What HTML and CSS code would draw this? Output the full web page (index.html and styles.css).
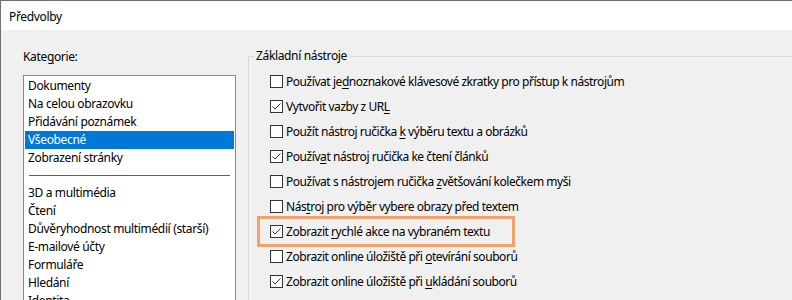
FILE: index.html
```html
<!DOCTYPE html>
<html lang="cs">
<head>
<meta charset="utf-8">
<title>Předvolby</title>
<link rel="stylesheet" href="styles.css">
</head>
<body>
<div class="window">
  <div class="titlebar">Předvolby</div>
  <div class="main">
    <div class="left">
      <div class="cat-label">Kate<u>g</u>orie:</div>
      <div class="listbox">
        <div class="item">Dokumenty</div>
        <div class="item">Na celou obrazovku</div>
        <div class="item">Přidávání poznámek</div>
        <div class="item selected">Všeobecné</div>
        <div class="item">Zobrazení stránky</div>
        <div class="sep"></div>
        <div class="item">3D a multimédia</div>
        <div class="item">Čtení</div>
        <div class="item">Důvěryhodnost multimédií (starší)</div>
        <div class="item">E-mailové účty</div>
        <div class="item">Formuláře</div>
        <div class="item">Hledání</div>
        <div class="item">Identita</div>
      </div>
    </div>
    <fieldset class="group">
      <legend>Základní nástroje</legend>
      <div class="rows">
        <label class="row"><span class="cb"></span><span>Používat je<u>d</u>noznakové klávesové zkratky pro přístup k nástrojům</span></label>
        <label class="row"><span class="cb checked"><svg viewBox="0 0 11 11" width="11" height="11"><polyline points="1.5,5.5 4,8 9.5,2.5" /></svg></span><span>Vytvořit vazby z UR<u>L</u></span></label>
        <label class="row"><span class="cb"></span><span>Použít nástroj ručička <u>k</u> výběru textu a obrázků</span></label>
        <label class="row"><span class="cb checked"><svg viewBox="0 0 11 11" width="11" height="11"><polyline points="1.5,5.5 4,8 9.5,2.5" /></svg></span><span>Použív<u>a</u>t nástroj ručička ke čtení článků</span></label>
        <label class="row"><span class="cb"></span><span>Používat s nástrojem ručička <u>z</u>většování kolečkem myši</span></label>
        <label class="row"><span class="cb"></span><span>Nás<u>t</u>roj pro výběr vybere obrazy před textem</span></label>
        <label class="row highlight"><span class="cb checked"><svg viewBox="0 0 11 11" width="11" height="11"><polyline points="1.5,5.5 4,8 9.5,2.5" /></svg></span><span>Zobrazit <u>r</u>ychlé akce na vybraném textu</span></label>
        <label class="row"><span class="cb"></span><span>Zobrazit online úložiště při <u>o</u>tevírání souborů</span></label>
        <label class="row"><span class="cb checked"><svg viewBox="0 0 11 11" width="11" height="11"><polyline points="1.5,5.5 4,8 9.5,2.5" /></svg></span><span>Zobrazit online úložiště při <u>u</u>kládání souborů</span></label>
      </div>
    </fieldset>
  </div>
</div>
</body>
</html>
```

FILE: styles.css
```css
html, body {
  margin: 0;
  padding: 0;
  height: 300px;
  overflow: hidden;
}
body {
  background: #f0f0f0;
  font-family: "Noto Sans", "Open Sans", sans-serif;
  font-size: 12px;
  letter-spacing: -0.35px;
  color: #000;
}
.window {
  height: 300px;
  border-top: 1px solid #707070;
  border-left: 1px solid #707070;
  box-sizing: border-box;
  overflow: hidden;
}
.titlebar {
  height: 29px;
  line-height: 32px;
  background: #fff;
  padding-left: 8px;
}
.main {
  display: flex;
  align-items: flex-start;
}
.left {
  margin-left: 22px;
  width: 213px;
  padding-top: 19px;
}
.cat-label {
  line-height: 16px;
  height: 16px;
}
.listbox {
  margin-top: 10px;
  border: 1px solid #8a8a8a;
  background: #fff;
  padding: 1px;
  height: 260px;
}
.item {
  height: 18px;
  line-height: 18px;
  padding-left: 3px;
  white-space: nowrap;
}
.item.selected {
  background: #0078d7;
  color: #fff;
}
.sep {
  height: 17px;
  display: flex;
  align-items: center;
  padding: 0 4px;
}
.sep::before {
  content: "";
  flex: 1;
  height: 1px;
  background: #2f6fa6;
}
.group {
  margin: 18px 0 0 12px;
  padding: 0 0 0 11px;
  border: 1px solid #d9d9d9;
  border-right: none;
  border-bottom: none;
  flex: 1;
  min-width: 0;
  height: 300px;
  letter-spacing: -0.45px;
}
.group legend {
  padding: 0 2px;
  margin-left: -6px;
  line-height: 16px;
  letter-spacing: -0.35px;
}
.rows {
  padding-top: 5px;
}
.row {
  display: flex;
  align-items: center;
  height: 25px;
  padding-left: 10px;
  white-space: nowrap;
}
.row.highlight {
  width: 242px;
  outline: 3px solid #f4a06b;
}
.cb {
  width: 11px;
  height: 11px;
  border: 1px solid #333;
  background: #fff;
  margin-right: 3px;
  flex: none;
  display: flex;
}
.cb svg polyline {
  fill: none;
  stroke: #333;
  stroke-width: 1;
}
u {
  text-decoration-thickness: 1px;
  text-underline-offset: 2px;
}
```
